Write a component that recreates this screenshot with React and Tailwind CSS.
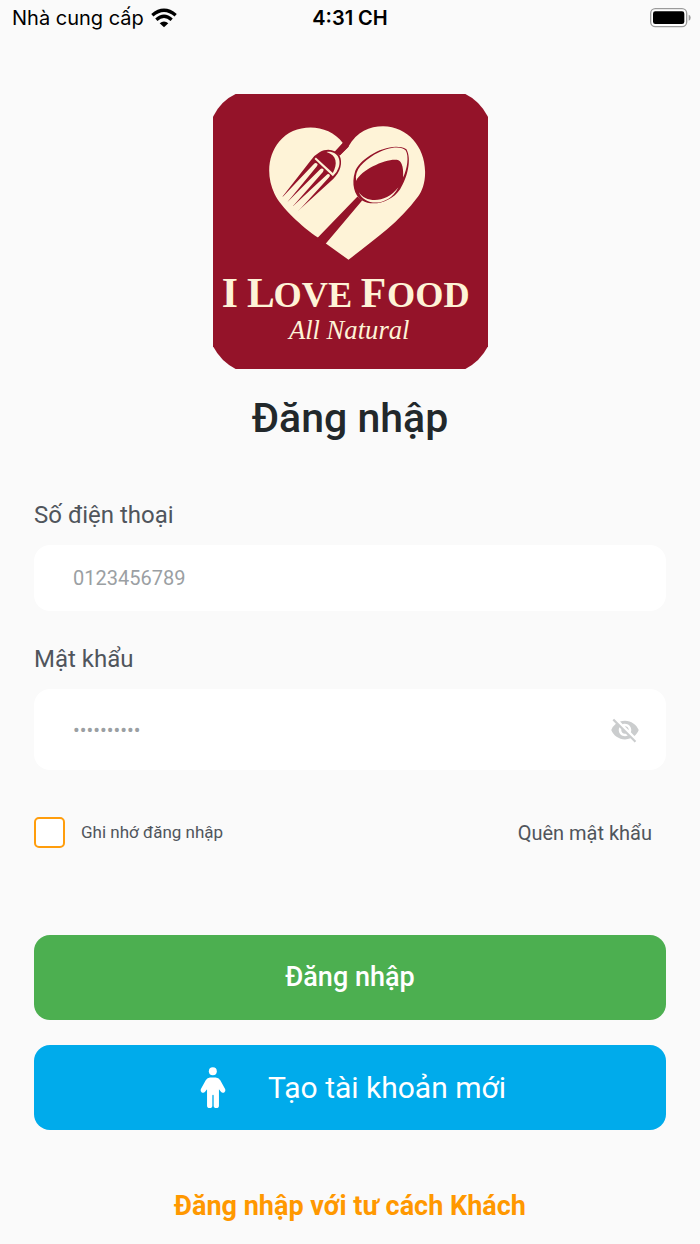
import { useState } from "react";
import { MdVisibility, MdVisibilityOff } from "react-icons/md";

function WifiIcon() {
  return (
    <svg viewBox="0 0 78 60" className="h-5 w-[26px]" aria-hidden="true">
      <g fill="none" stroke="#000" strokeWidth="10">
        <path d="M4 22 Q39 -8 74 22" />
        <path d="M16 35 Q39 15 62 35" />
      </g>
      <path d="M26 46 Q39 35 52 46 L39 58 Z" fill="#000" />
    </svg>
  );
}

function BatteryIcon() {
  return (
    <svg viewBox="0 0 126 60" className="h-5 w-[42px]" aria-hidden="true">
      <rect x="2" y="2" width="108" height="54" rx="14" fill="#fff" stroke="#9b9b9b" strokeWidth="4" />
      <rect x="9" y="10" width="94" height="38" rx="7" fill="#000" />
      <path d="M116 20 Q122 22 122 29 Q122 36 116 38 Z" fill="#9b9b9b" />
    </svg>
  );
}

function PersonIcon() {
  return (
    <svg viewBox="0 0 78 124" className="h-[41px] w-[26px]" fill="#fff" aria-hidden="true">
      <circle cx="38.500" cy="13" r="12" />
      <path d="M30 32 H47 Q56 32 61 40 L76 67 Q78 73 73 77 Q67 80 63 75 L57 67 V117 Q57 124 49 124 Q41 124 41 117 V87 Q41 84 39 84 Q37 84 37 87 V117 Q37 124 29 124 Q21 124 21 117 V67 L15 75 Q11 80 5 77 Q0 73 2 67 L17 40 Q22 32 30 32 Z" />
    </svg>
  );
}

function Logo() {
  return (
    <svg viewBox="22 26 826 826" className="size-[275px]" role="img" aria-label="I Love Food, All Natural">
      <path
        d="M90 26 H780 Q822 46 848 94 V784 Q824 830 780 852 H90 Q46 830 22 784 V94 Q46 46 90 26 Z"
        fill="#941329"
      />
      <path
        d="M429 524 L361 475 L337 457 C290 425 225 365 207 326 C180 270 188 208 221 169 C264 113 366 110 412 173 L388 200 L403 210 L428 185 C455 138 492 123 533 123 C607 124 658 185 659 258 C660 292 650 318 638 334 C580 415 490 475 429 524 Z"
        fill="#fef3d7"
      />
      <g fill="#941329">
        <path d="M414 171 L430 184 L403 211 L388 199 Z" />
        <path d="M342 201 C365 188 390 193 402 211 C413 232 404 262 383 281 L278 377 L231 334 L316 225 Q326 210 342 201 Z" />
        <path d="M456 334 L470 346 L361 475 L357 480 L330 462 L337 457 Z" />
        <path d="M603 192 C619 221 607 275 584 312 C560 349 504 366 470 346 C445 331 438 294 448 262 C460 219 554 165 603 192 Z" />
      </g>
      <g fill="#fef3d7">
        <path d="M325 236 Q330 230 336 236 Q337 239 334 243 L247 349 L236 350 L231 335 Z" />
        <path d="M344 252 Q349 247 354 252 Q355 256 352 260 L262 363 L250 364 L247 349 Z" />
        <path d="M363 269 Q368 264 373 269 Q374 273 370 277 L278 378 L266 378 L262 363 Z" />
        <path d="M363 200 C399 196 413 230 393 260 L382 273 L327 221 L331 217 L382 263 C397 236 394 209 363 200 Z" />
        <path d="M452 287 C446 253 474 229 507 208 C549 183 588 181 601 196 C611 213 606 250 593 277 C594 253 592 232 579 225 C551 216 468 251 452 287 Z" />
        <path d="M460 321 C481 353 541 356 579 306 C547 369 475 361 460 321 Z" />
      </g>
      <g fill="#fef3d7">
        <text y="665" fontSize="125" className="font-['Liberation_Serif',serif] font-bold">
          <tspan x="48">I</tspan>
          <tspan x="124">L</tspan>
          <tspan x="204" fontSize="109">OVE</tspan>
          <tspan x="466">F</tspan>
          <tspan x="545" fontSize="109">OOD</tspan>
        </text>
        <text x="250" y="763" fontSize="80" className="font-['Liberation_Serif',serif] italic">
          All Natural
        </text>
      </g>
    </svg>
  );
}

export default function App() {
  const [showPassword, setShowPassword] = useState(false);

  return (
    <div className="min-h-screen bg-[#fafafa] pb-5 font-['Roboto',sans-serif] text-[#50555c]">
      <header className="grid grid-cols-3 items-center px-2 pt-[7px] font-['Inter',sans-serif] text-xl leading-[22px] text-black">
        <div className="flex items-center gap-[7px] pl-1 whitespace-nowrap">
          <span>Nhà cung cấp</span>
          <WifiIcon />
        </div>
        <span className="text-center font-semibold">4:31 CH</span>
        <div className="flex justify-end">
          <BatteryIcon />
        </div>
      </header>

      <main className="px-[34px] pt-[65px]">
        <div className="flex flex-col items-center">
          <Logo />
          <h1 className="mt-6 text-[41px] leading-[50px] font-medium text-[#22282b]">Đăng nhập</h1>
        </div>

        <form className="mt-14 flex flex-col" onSubmit={(e) => e.preventDefault()}>
          <label htmlFor="phone" className="text-2xl leading-8">
            Số điện thoại
          </label>
          <input
            id="phone"
            type="tel"
            placeholder="0123456789"
            className="mt-3.5 h-[66px] w-full rounded-2xl bg-white px-[39px] text-xl outline-none placeholder:text-[#9b9fa3]"
          />

          <label htmlFor="password" className="mt-8 text-2xl leading-8">
            Mật khẩu
          </label>
          <div className="mt-3.5 flex h-[81px] items-center rounded-2xl bg-white pr-[26px] pl-[39px]">
            <input
              id="password"
              type={showPassword ? "text" : "password"}
              placeholder="••••••••••"
              className="h-full min-w-0 flex-1 bg-transparent text-xl outline-none placeholder:text-[#9b9fa3]"
            />
            <button
              type="button"
              aria-label="Hiện mật khẩu"
              onClick={() => setShowPassword(!showPassword)}
              className="text-[#cbcdce]"
            >
              {showPassword ? <MdVisibility size={30} /> : <MdVisibilityOff size={30} />}
            </button>
          </div>

          <div className="mt-[47px] flex items-center justify-between pr-3.5">
            <label className="flex items-center gap-4 text-[17px]">
              <input
                type="checkbox"
                className="size-[31px] appearance-none rounded-[5px] border-2 border-[#ff9d0c] bg-white checked:bg-[#ff9d0c]"
              />
              Ghi nhớ đăng nhập
            </label>
            <a href="#forgot" className="text-xl">
              Quên mật khẩu
            </a>
          </div>

          <button type="submit" className="mt-[87px] h-[85px] rounded-2xl bg-[#4caf50] text-[27px] font-medium text-white">
            Đăng nhập
          </button>
          <button
            type="button"
            className="mt-[25px] flex h-[85px] items-center justify-center gap-[42px] rounded-2xl bg-[#00abeb] pl-1.5 text-[30px] text-white"
          >
            <PersonIcon />
            Tạo tài khoản mới
          </button>
        </form>

        <a href="#guest" className="mt-[58px] block text-center text-[27px] leading-9 font-bold text-[#ff9800]">
          Đăng nhập với tư cách Khách
        </a>
      </main>
    </div>
  );
}
